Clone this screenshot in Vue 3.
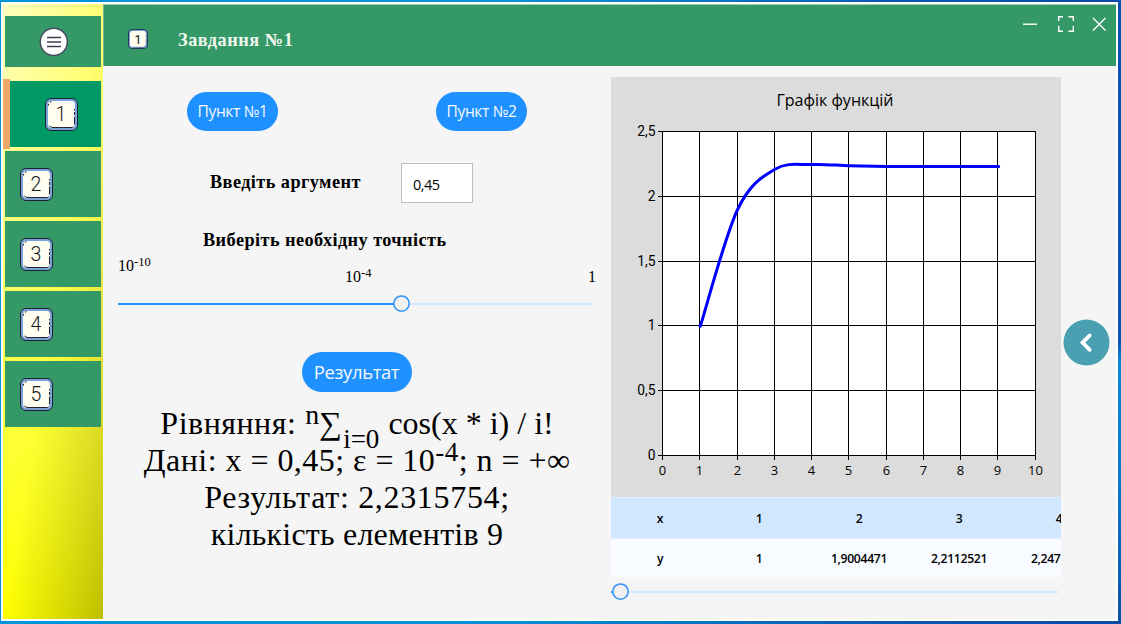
<script setup>
const tasks = [1, 2, 3, 4, 5]

const values = [1, 1.9004471, 2.2112521, 2.2477533, 2.2382866, 2.233052, 2.231796, 2.231596, 2.2315754]
const left = 52
const bottom = 378.8
const toX = (v) => left + v * 37.3
const toY = (v) => bottom - v * 129.6

const gridX = [0, 37, 75, 112, 149, 186, 224, 261, 298, 335, 373].map((offset, i) => ({
  label: String(i),
  pos: 51.5 + offset,
}))
const gridY = ['0', '0,5', '1', '1,5', '2', '2,5'].map((label, i) => ({
  label,
  pos: Math.round(378 - i * 64.8) + 0.5,
}))

// Smooth spline through every partial sum
function curvePath() {
  const pts = values.map((v, i) => [toX(i + 1), toY(v)])
  let d = `M${pts[0][0]} ${pts[0][1]}`
  for (let i = 0; i < pts.length - 1; i++) {
    const p0 = pts[i - 1] || pts[i]
    const p1 = pts[i]
    const p2 = pts[i + 1]
    const p3 = pts[i + 2] || p2
    d += ` C${p1[0] + (p2[0] - p0[0]) / 6} ${p1[1] + (p2[1] - p0[1]) / 6}`
    d += ` ${p2[0] - (p3[0] - p1[0]) / 6} ${p2[1] - (p3[1] - p1[1]) / 6} ${p2[0]} ${p2[1]}`
  }
  return d
}
const curve = curvePath()

const rows = [
  ['x', '1', '2', '3', '4'],
  ['y', '1', '1,9004471', '2,2112521', '2,2477533'],
]
</script>

<template>
  <div class="desktop">
    <div class="window">
      <aside class="sidebar">
        <button class="menu">
          <svg width="30" height="30" viewBox="0 0 30 30">
            <circle cx="14.8" cy="14.8" r="13.6" fill="#fff" stroke="#474b5c" stroke-width="1.5" />
            <path d="M8 10.5H22M8 15H22M8 19.5H22" stroke="#3c4050" stroke-width="1.5" />
          </svg>
        </button>
        <nav>
          <div v-for="n in tasks" :key="n" class="task" :class="{ active: n === 1 }">
            <div class="tile">
              <svg width="33" height="33" viewBox="0 0 33 33">
                <rect x="0.5" y="0.5" width="32" height="32" rx="5.5" fill="#7ba3da" stroke="#1c2230" />
                <rect x="3" y="3" width="27" height="27" rx="4" fill="#fffef0" />
                <path d="M3.5 7.500V6M5 4.500L6.500 3.500M29.500 11V12.500M29.500 14V17M29.500 18.500V26.500M28.500 28.500L27.500 29.500H7L4.500 28" fill="none" stroke="#20242c" stroke-width="1" />
                <text x="16" y="23" text-anchor="middle">{{ n }}</text>
              </svg>
            </div>
          </div>
        </nav>
      </aside>

      <div class="main">
        <header>
          <svg class="badge" width="20" height="20" viewBox="0 0 20 20">
            <rect x="0.5" y="0.5" width="19" height="19" rx="3.5" fill="#7ba3da" stroke="#263c5c" />
            <rect x="2" y="2" width="16" height="16" rx="2.5" fill="#fffef0" />
            <path d="M18 6V8M18 10V15.5L16 18.200H4" fill="none" stroke="#26303c" stroke-width="0.4" />
            <text x="10" y="14.7" text-anchor="middle">1</text>
          </svg>
          <h1>Завдання №1</h1>
          <svg class="controls" width="84" height="18" viewBox="0 0 84 18" fill="none" stroke="#fff">
            <path d="M1 9.2H15" stroke-width="1.4" />
            <path d="M36.7 6V1.7H41M46.500 1.700H51.300V6M51.300 11V16.300H46.500M41 16.300H36.700V11" stroke-width="1.4" />
            <path d="M71 3L83.500 15.500M83.500 3L71 15.500" stroke-width="1.4" />
          </svg>
        </header>

        <div class="content">
          <section class="form">
            <div class="points">
              <button class="pill"><span>Пункт №1</span></button>
              <button class="pill"><span>Пункт №2</span></button>
            </div>
            <div class="argument">
              <label>Введіть аргумент</label>
              <div class="input">0,45</div>
            </div>
            <div class="precision-title">Виберіть необхідну точність</div>
            <div class="scale">
              <span class="s1">10<sup>-10</sup></span>
              <span class="s2">10<sup>-4</sup></span>
              <span class="s3">1</span>
            </div>
            <svg class="slider" width="475" height="18" viewBox="0 0 475 18">
              <rect x="0" y="8" width="475" height="2" fill="#d1e7fd" />
              <rect x="0" y="8" width="276" height="2" fill="#1e90ff" />
              <circle cx="283.5" cy="8.6" r="7.7" fill="#f0f0f0" stroke="#2f94f8" stroke-width="1.5" />
            </svg>
            <button class="pill result"><span>Результат</span></button>
            <div class="answer">
              <div class="l1"><span class="lead">Рівняння:</span> <sup>n</sup>∑<sub>i=0</sub> cos(x * i) / i!</div>
              <div class="l2">Дані: x = 0,45; ε = 10<sup>-4</sup>; n = +∞</div>
              <div class="l3">Результат: 2,2315754;</div>
              <div class="l4">кількість елементів 9</div>
            </div>
          </section>

          <section class="graph">
            <svg width="450" height="420" viewBox="0 0 450 420">
              <rect width="450" height="420" fill="#dcdcdc" />
              <rect x="51" y="54" width="374" height="325" fill="#fff" />
              <text class="caption" x="224" y="29" text-anchor="middle" textLength="117">Графік функцій</text>
              <g stroke="#000" stroke-width="1">
                <path v-for="g in gridX" :key="'x' + g.label" :d="`M${g.pos} 54V383`" />
                <path v-for="g in gridY" :key="'y' + g.label" :d="`M47 ${g.pos}H425`" />
              </g>
              <text v-for="g in gridX" :key="'tx' + g.label" class="tick" :x="g.pos" y="398" text-anchor="middle">{{ g.label }}</text>
              <text v-for="g in gridY" :key="'ty' + g.label" class="tick roboto" x="44.500" :y="g.pos + 4.500" text-anchor="end">{{ g.label }}</text>
              <path :d="curve" fill="none" stroke="#0000ff" stroke-width="3" stroke-linecap="round" />
            </svg>
            <div class="table">
              <div v-for="row in rows" :key="row[0]" class="row">
                <span v-for="(cell, i) in row" :key="i">{{ cell }}</span>
              </div>
            </div>
            <svg class="scroll" width="450" height="18" viewBox="0 0 450 18">
              <rect x="0" y="8" width="447" height="2" fill="#d1e7fd" />
              <rect x="0" y="8" width="3" height="2" fill="#1e90ff" />
              <circle cx="9.500" cy="8.600" r="7.700" fill="#f0f0f0" stroke="#2f94f8" stroke-width="1.500" />
            </svg>
          </section>

          <button class="back">
            <svg width="47" height="47" viewBox="0 0 47 47">
              <circle cx="23.500" cy="23.500" r="23" fill="#4aa0b0" />
              <path d="M26.700 16.400L19.600 23.600L26.700 30.800" fill="none" stroke="#fff" stroke-width="3.800" stroke-linecap="round" stroke-linejoin="miter" />
            </svg>
          </button>
        </div>
      </div>
    </div>
  </div>
</template>

<style>
body {
  margin: 0;
  overflow: hidden;
}
</style>

<style scoped>
* {
  box-sizing: border-box;
}
button {
  border: 0;
  padding: 0;
  background: none;
  font: inherit;
}
svg {
  display: block;
}
.desktop {
  width: 1121px;
  height: 624px;
  padding: 2px 3px 3px 1px;
  background:
    linear-gradient(#0a4fb4, #0b55b8 55%, #0a88dc 58%, #0a7cd0 75%, #0a4fa4) right / 3px 100% no-repeat,
    linear-gradient(90deg, #0095da, #008fd6 45%, #0a58b4 80%, #0a4aa4);
}
.window {
  width: 1117px;
  height: 619px;
  border: 2px solid #fff;
  display: flex;
  background: #f5f5f5;
}
.sidebar {
  width: 100px;
  height: 615px;
  padding-top: 12px;
  position: relative;
  background: linear-gradient(to bottom right, rgba(0, 0, 0, 0) 50%, rgba(0, 0, 0, 0.25)), #ff0;
}
.sidebar::before {
  content: '';
  position: absolute;
  inset: 0;
  background: linear-gradient(90deg, rgba(255, 255, 255, 0.76), rgba(255, 255, 255, 0.46));
  mask-image: linear-gradient(#000, transparent);
}
.menu {
  position: relative;
  width: 96px;
  height: 51px;
  margin-left: 2px;
  background: #349967;
  display: flex;
  align-items: center;
  justify-content: center;
  padding-left: 1px;
}
nav {
  position: relative;
  margin-top: 12px;
}
.task {
  height: 66px;
  margin: 2px 2px 4px 2px;
  background: #349967;
  padding: 17px 0 0 15px;
}
.task.active {
  height: 70px;
  margin: 0 2px 0 0;
  border-left: 7px solid #f0a868;
  background: #009966 content-box;
  padding: 2px 0;
}
.task.active .tile {
  padding: 17px 0 16px 35px;
}
.tile text {
  font: 300 19.5px Roboto, sans-serif;
  fill: #15171c;
}
.main {
  width: 1013px;
}
header {
  height: 62px;
  background: #349967;
  border-top: 1px solid #9ccdb4;
  border-left: 1px solid #78b898;
  display: flex;
  padding-left: 24px;
}
.badge {
  margin-top: 24px;
}
.badge text {
  font: 400 12.5px Roboto, sans-serif;
  fill: #15171c;
}
h1 {
  margin: 24px 0 0 30px;
  width: 800px;
  height: 22px;
  font: bold 18.3px/22px 'Liberation Serif', serif;
  letter-spacing: 0.52px;
  color: #f0f8ee;
}
.controls {
  margin: 10px 0 0 44px;
}
.content {
  display: flex;
  height: 553px;
}
.form {
  width: 508px;
  padding-top: 26px;
  font-family: 'Liberation Serif', serif;
  color: #000;
  white-space: nowrap;
}
.points {
  display: flex;
  gap: 158px;
  margin-left: 84px;
}
.pill {
  width: 91px;
  height: 39px;
  border-radius: 20px;
  background: #1e90ff;
  color: #f4f8ff;
  font: 400 15.6px/39px 'Open Sans', sans-serif;
  letter-spacing: -0.44px;
  display: flex;
  justify-content: center;
  white-space: nowrap;
}
.argument {
  display: flex;
  margin: 32px 0 0 107px;
}
label {
  width: 191px;
  font-size: 18.3px;
  line-height: 38px;
  font-weight: bold;
  letter-spacing: 0.42px;
}
.input {
  width: 72px;
  height: 40px;
  border: 1px solid #bdbdbd;
  background: #fff;
  padding-left: 11px;
  font: 14.5px/41px 'Open Sans', sans-serif;
  letter-spacing: -0.5px;
}
.precision-title {
  margin: 27px 0 0 100px;
  height: 20px;
  font-size: 18.3px;
  line-height: 20px;
  font-weight: bold;
  letter-spacing: 0.42px;
}
.scale {
  display: flex;
  height: 45px;
  font-size: 16px;
  line-height: 20px;
  padding-left: 15px;
}
.scale sup {
  font-size: 12.5px;
  line-height: 0;
  vertical-align: 5.500px;
}
.s1 {
  width: 227px;
  padding-top: 6px;
}
.s2 {
  width: 243px;
  padding-top: 17px;
}
.s3 {
  padding-top: 17px;
}
.slider {
  margin-left: 15px;
}
.result {
  width: 110px;
  height: 40px;
  margin: 39px 0 0 199px;
  padding-right: 1px;
  font-size: 18.5px;
  line-height: 40px;
  letter-spacing: -0.4px;
}
.answer {
  margin-top: 13px;
  font-size: 32px;
  line-height: 37px;
  width: 508px;
  text-align: center;
}
.lead {
  letter-spacing: 0.5px;
}
.l2 {
  letter-spacing: 0.46px;
}
.l3 {
  letter-spacing: 0.68px;
}
.l4 {
  letter-spacing: 0.2px;
}
.answer sup,
.answer sub {
  font-size: 27px;
  line-height: 0;
}
.l1 sup {
  margin-left: 1px;
  font-size: 28px;
}
.l1 sub {
  margin: 0 1px;
}
.answer sup {
  vertical-align: 10px;
}
.answer sub {
  vertical-align: -14px;
}
.graph {
  width: 450px;
  padding-top: 11px;
}
.caption {
  font: 16px 'Open Sans', sans-serif;
}
.tick {
  font: 13px 'Open Sans', sans-serif;
}
.tick.roboto {
  font: 13.8px Roboto, sans-serif;
}
.table {
  width: 450px;
  overflow: hidden;
}
.row {
  display: grid;
  grid-template-columns: 98px 100px 100px 100px 100px;
  width: 498px;
  height: 41px;
  background: #d1e7fe;
  border-top: 1px solid #e1eefb;
  text-align: center;
  font: 600 12.2px/42px 'Open Sans', sans-serif;
  letter-spacing: -0.33px;
}
.row:last-child {
  height: 39px;
  line-height: 40px;
  background: #f8fbff;
}
.scroll {
  margin-top: 6px;
}
.back {
  margin: 253px 0 0 2px;
  width: 47px;
  height: 47px;
}
</style>
